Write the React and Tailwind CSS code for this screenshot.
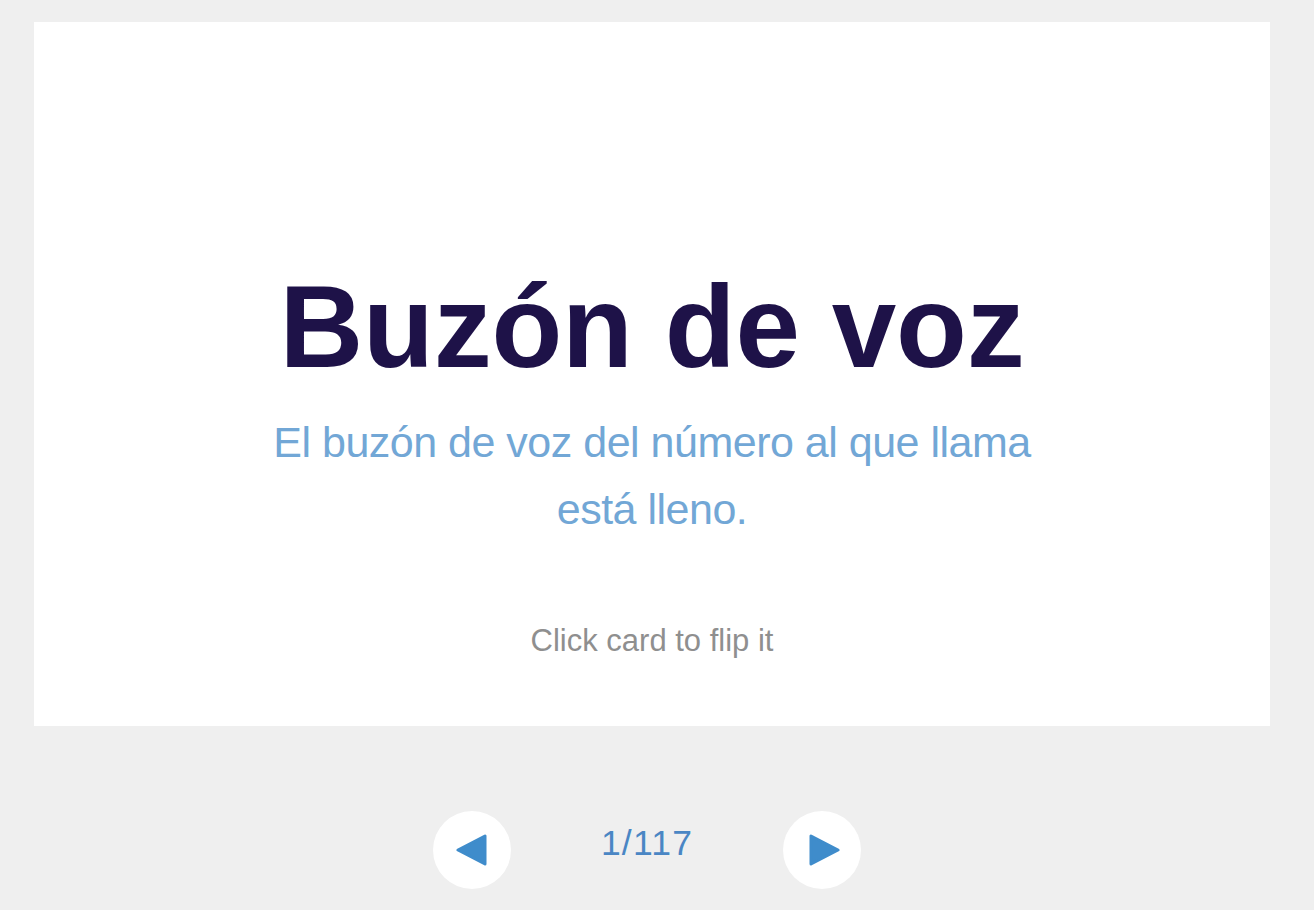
import React from 'react';

const font = { fontFamily: '"Liberation Sans", Arial, Helvetica, sans-serif' };

function Arrow({ dir }) {
  // rounded triangle pointing left or right
  const pts = dir === 'left' ? '29,2 29,30 2,16' : '2,2 2,30 29,16';
  return (
    <svg width="31" height="32" viewBox="0 0 31 32" aria-hidden="true">
      <polygon points={pts} fill="#3f8ccb" stroke="#3f8ccb" strokeWidth="3" strokeLinejoin="round" />
    </svg>
  );
}

function NavButton({ dir, label }) {
  return (
    <button
      aria-label={label}
      className="w-[78px] h-[78px] rounded-full bg-white flex items-center justify-center"
    >
      <span className={dir === 'left' ? 'mr-[1px]' : 'ml-[5px]'}>
        <Arrow dir={dir} />
      </span>
    </button>
  );
}

export default function App() {
  return (
    <div className="min-h-[910px] w-full bg-[#efefef] pt-[22px]" style={font}>
      {/* Flashcard */}
      <div className="mx-[34px] w-[1236px] h-[704px] bg-white flex flex-col items-center pt-[247px] cursor-pointer">
        <h1 className="text-[116px] leading-none font-bold text-[#1e1248] tracking-[-0.2px]">
          Buzón de voz
        </h1>
        <p className="mt-[24px] max-w-[800px] text-center text-[43px] leading-[67px] tracking-[-0.5px] text-[#72a7d6]">
          El buzón de voz del número al que llama está lleno.
        </p>
        <p className="mt-[80px] text-[31px] leading-[36px] text-[#8f8f8f]">
          Click card to flip it
        </p>
      </div>

      {/* Controls */}
      <div className="mt-[85px] flex items-center justify-center gap-[90px] pr-[20px]">
        <NavButton dir="left" label="Previous card" />
        <span className="text-[35.5px] leading-none tracking-[1.2px] text-[#4a86c4] mb-[12px]">1/117</span>
        <NavButton dir="right" label="Next card" />
      </div>
    </div>
  );
}
